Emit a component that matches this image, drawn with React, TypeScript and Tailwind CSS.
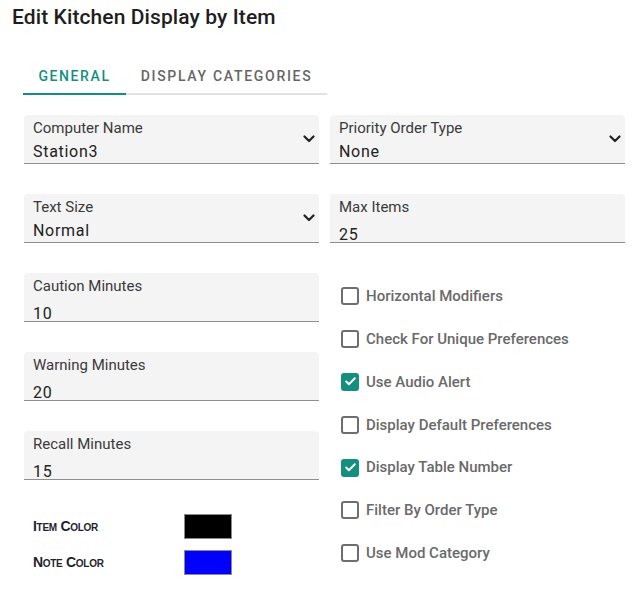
import { Check } from "lucide-react";

const font = { fontFamily: "Roboto, 'Noto Sans', sans-serif" };

function Chevron() {
  return (
    <svg className="mr-[4px] shrink-0" width="12" height="8" viewBox="0 0 12 8" fill="none">
      <path d="M1.5 1.5 L6 6 L10.5 1.5" stroke="#222" strokeWidth="2.2" strokeLinecap="round" strokeLinejoin="round" />
    </svg>
  );
}

function Field({ label, value, select }: { label: string; value: string; select?: boolean }) {
  return (
    <div className="flex h-[49px] items-center rounded-t-[4px] border-b border-[#8f8f8f] bg-[#f4f4f4] pl-[9px]">
      <div className="flex h-full flex-1 flex-col">
        <div className="pt-[3px] text-[15px] leading-5 text-[#3a3a3a]">{label}</div>
        <div className={`${select ? "mt-[5px]" : "mt-[9px]"} text-[16px] leading-[18px] tracking-[0.7px] text-[#222]`}>
          {value}
        </div>
      </div>
      {select && <Chevron />}
    </div>
  );
}

function Box({ label, checked }: { label: string; checked?: boolean }) {
  return (
    <div className="flex h-[42.8px] items-center pl-[11px]">
      {checked ? (
        <span className="flex h-[18px] w-[18px] items-center justify-center rounded-[3px] bg-[#148f7e]">
          <Check className="h-[13px] w-[13px] text-white" strokeWidth={3.5} />
        </span>
      ) : (
        <span className="h-[18px] w-[18px] rounded-[3px] border-2 border-[#6e6e6e]" />
      )}
      <span className="ml-[7px] text-[15px] font-medium text-[#6a6a6a]">{label}</span>
    </div>
  );
}

function Swatch({ label, color }: { label: string; color: string }) {
  return (
    <div className="flex items-center">
      <span
        className="w-[160px] pl-[9px] text-[14px] font-bold tracking-[-0.3px] text-[#1f2430]"
        style={{ fontFamily: "'Liberation Sans', Arial, sans-serif", fontVariant: "small-caps" }}
      >
        {label}
      </span>
      <span className={`h-[25px] w-[48px] border border-[#8a8a8a] ${color}`} />
    </div>
  );
}

export default function App() {
  return (
    <div className="min-h-screen w-[637px] bg-white" style={font}>
      <h1 className="mt-[3px] pl-[12px] text-[21px] font-medium leading-7 tracking-[0.1px] text-[#1e1e1e]">
        Edit Kitchen Display by Item
      </h1>

      <div className="ml-[23px] mt-[35px] flex w-[304px]">
        <div className="w-[103px] border-b-2 border-[#148f7e] pb-[7px] text-center text-[14px] font-medium leading-5 tracking-[1.6px] text-[#148f7e]">
          GENERAL
        </div>
        <div className="flex-1 border-b-2 border-[#e2e2e2] pb-[7px] text-center text-[14px] font-medium leading-5 tracking-[1.7px] text-[#666]">
          DISPLAY CATEGORIES
        </div>
      </div>

      <div className="ml-[24px] mt-[20px] grid w-[601px] grid-cols-[295px_295px] gap-x-[11px]">
        <div className="flex flex-col">
          <div className="flex flex-col gap-[30px]">
            <Field label="Computer Name" value="Station3" select />
            <Field label="Text Size" value="Normal" select />
            <Field label="Caution Minutes" value="10" />
            <Field label="Warning Minutes" value="20" />
            <Field label="Recall Minutes" value="15" />
          </div>
          <div className="mt-[34px] flex flex-col gap-[11px]">
            <Swatch label="Item Color" color="bg-black" />
            <Swatch label="Note Color" color="bg-[#0000ff]" />
          </div>
        </div>
        <div className="flex flex-col">
          <Field label="Priority Order Type" value="None" select />
          <div className="mt-[30px]">
            <Field label="Max Items" value="25" />
          </div>
          <div className="mt-[32px] flex flex-col">
            <Box label="Horizontal Modifiers" />
            <Box label="Check For Unique Preferences" />
            <Box label="Use Audio Alert" checked />
            <Box label="Display Default Preferences" />
            <Box label="Display Table Number" checked />
            <Box label="Filter By Order Type" />
            <Box label="Use Mod Category" />
          </div>
        </div>
      </div>
    </div>
  );
}
